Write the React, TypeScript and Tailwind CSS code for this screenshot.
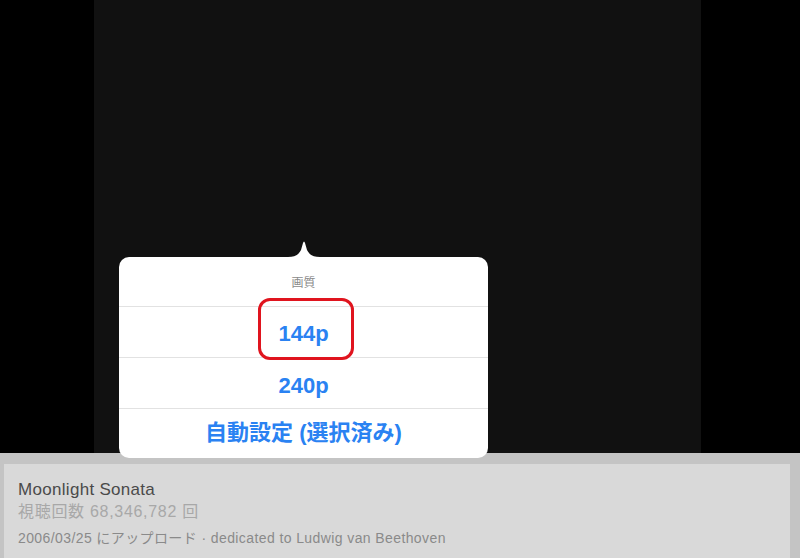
import React from 'react';

const font = { fontFamily: '"Liberation Sans", "Noto Sans CJK JP", sans-serif' };

const QualityPopover: React.FC = () => (
  <div className="absolute left-[119px] top-[240px] w-[369px]">
    {/* arrow */}
    <div className="flex justify-center">
      <svg width="32" height="17" viewBox="0 0 32 17" className="ml-[1px]">
        <path d="M0 17 C8 17 11 14 13 10 L15 3 Q16 0 17 3 L19 10 C21 14 24 17 32 17 Z" fill="#ffffff" />
      </svg>
    </div>
    <div className="bg-white rounded-[10px]">
      <div className="h-[50px] pt-[2px] flex items-center justify-center text-[12px] text-[#8a8a8a] border-b border-[#e2e2e2]">
        画質
      </div>
      <div className="relative h-[51px] flex items-center justify-center border-b border-[#e2e2e2] text-[22px] font-bold text-[#2a82f2]">
        <span className="mt-[2px]">144p</span>
        {/* red annotation */}
        <div className="absolute left-[139px] top-[-9px] w-[96px] h-[62px] border-[3px] border-[#e0141e] rounded-[12px]" />
      </div>
      <div className="h-[51px] flex items-center justify-center border-b border-[#e2e2e2] text-[22px] font-bold text-[#2a82f2]">
        <span className="mt-[4px]">240p</span>
      </div>
      <div className="h-[49px] flex items-center justify-center text-[22px] font-bold text-[#2a82f2]">
        <span className="mt-[-2px]">自動設定 (選択済み)</span>
      </div>
    </div>
  </div>
);

export default function App() {
  return (
    <div className="relative w-[800px] h-[558px] bg-black overflow-hidden" style={font}>
      <div className="flex h-[453px]">
        <div className="w-[94px] bg-black" />
        <div className="w-[607px] bg-[#111111]" />
        <div className="flex-1 bg-black" />
      </div>
      <div className="h-[105px] bg-[#c4c4c4] pt-[11px] pl-[4px] pr-[10px]">
        <div className="h-full bg-[#d9d9d9] pl-[14px] pt-[15px]">
          <div className="text-[17px] leading-[22px] tracking-[0.3px] text-[#4a4a4a]">Moonlight Sonata</div>
          <div className="text-[16px] leading-[22px] tracking-[0.7px] text-[#a8a8a8]">視聴回数 68,346,782 回</div>
          <div className="text-[14px] leading-[18px] mt-[6px] tracking-[0.4px] text-[#8a8a8a]">
            2006/03/25 にアップロード · dedicated to Ludwig van Beethoven
          </div>
        </div>
      </div>
      <QualityPopover />
    </div>
  );
}
